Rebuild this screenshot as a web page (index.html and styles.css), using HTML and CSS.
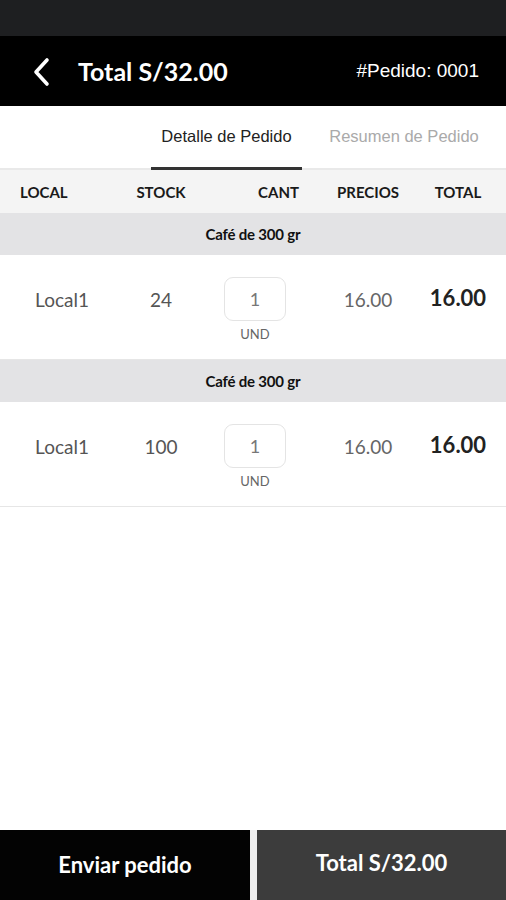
FILE: index.html
```html
<!DOCTYPE html>
<html lang="es">
<head>
<meta charset="UTF-8">
<meta name="viewport" content="width=device-width, initial-scale=1.0">
<title>Detalle de Pedido</title>
<link rel="stylesheet" href="styles.css">
</head>
<body>
<div class="app">
  <div class="status-bar"></div>

  <header class="top-bar">
    <a class="back" href="#">
      <svg width="24" height="32" viewBox="0 0 24 32">
        <polyline points="15,4 4,16 15,28" fill="none" stroke="#fff" stroke-width="3.6" stroke-linecap="round" stroke-linejoin="round"/>
      </svg>
    </a>
    <h1 class="title">Total S/32.00</h1>
    <span class="order-no">#Pedido: 0001</span>
  </header>

  <nav class="tabs">
    <a class="tab active" href="#">Detalle de Pedido</a>
    <a class="tab" href="#">Resumen de Pedido</a>
  </nav>

  <div class="cols">
    <span class="c-local">LOCAL</span>
    <span class="c-stock">STOCK</span>
    <span class="c-cant">CANT</span>
    <span class="c-price">PRECIOS</span>
    <span class="c-total">TOTAL</span>
  </div>

  <div class="items">
    <div class="group">Café de 300 gr</div>
    <div class="row">
      <span class="local">Local1</span>
      <span class="stock">24</span>
      <div class="qty">
        <input type="text" value="1">
        <span class="unit">UND</span>
      </div>
      <span class="price">16.00</span>
      <span class="total">16.00</span>
    </div>

    <div class="group">Café de 300 gr</div>
    <div class="row">
      <span class="local">Local1</span>
      <span class="stock">100</span>
      <div class="qty">
        <input type="text" value="1">
        <span class="unit">UND</span>
      </div>
      <span class="price">16.00</span>
      <span class="total">16.00</span>
    </div>
  </div>

  <footer class="bottom-bar">
    <button class="btn send">Enviar pedido</button>
    <button class="btn sum">Total S/32.00</button>
  </footer>
</div>
</body>
</html>
```

FILE: styles.css
```css
body {
  margin: 0;
  padding: 0;
  font-family: Lato, "Open Sans", sans-serif;
  background-color: #fff;
}
.app {
  display: flex;
  flex-direction: column;
  height: 900px;
}
.status-bar {
  height: 36px;
  background-color: #1e1f21;
}
.top-bar {
  display: flex;
  align-items: center;
  height: 70px;
  padding: 0 27px 0 32px;
  background-color: #000;
  color: #fff;
}
.back {
  display: flex;
  width: 24px;
  height: 32px;
  margin-top: 1px;
}
.title {
  margin: 0 0 0 22px;
  font-size: 25px;
  font-weight: 700;
}
.order-no {
  margin-left: auto;
  font-family: "Liberation Sans", Arial, sans-serif;
  font-size: 19px;
}
.tabs {
  display: flex;
  justify-content: flex-end;
  height: 62px;
  border-bottom: 2px solid #e9e9e9;
}
.tab {
  display: flex;
  align-items: center;
  justify-content: center;
  margin-bottom: -2px;
  border-bottom: 3px solid transparent;
  font-family: "Liberation Sans", Arial, sans-serif;
  font-size: 16.5px;
  color: #aaa;
  text-decoration: none;
}
.tab.active {
  width: 151px;
  color: #222;
  border-bottom-color: #333;
}
.tab + .tab {
  width: 204px;
}
.cols, .row {
  display: grid;
  grid-template-columns: 122px 78px 110px 116px 1fr;
  align-items: center;
}
.cols {
  height: 43px;
  background-color: #f4f4f4;
  font-size: 15px;
  font-weight: 700;
  color: #1a1a1a;
}
.c-local {
  padding-left: 20px;
}
.c-stock, .c-price {
  text-align: center;
}
.c-cant {
  text-align: right;
  padding-right: 11px;
}
.c-total {
  text-align: center;
  padding-right: 16px;
}
.group {
  height: 42px;
  line-height: 42px;
  text-align: center;
  background-color: #e3e3e5;
  font-size: 15px;
  font-weight: 700;
  color: #111;
  letter-spacing: -0.2px;
}
.row {
  align-items: start;
  height: 104px;
  border-bottom: 1px solid #e6e6e6;
  color: #555;
  font-size: 19px;
  text-align: center;
}
.local, .stock, .price {
  padding-top: 33px;
}
.local {
  padding-left: 2px;
}
.qty {
  display: flex;
  flex-direction: column;
  align-items: center;
  padding-top: 22px;
}
.qty input {
  width: 62px;
  height: 44px;
  box-sizing: border-box;
  border: 1px solid #e4e4e4;
  border-radius: 9px;
  text-align: center;
  font-family: Lato, sans-serif;
  font-size: 18px;
  color: #777;
  outline: none;
}
.unit {
  margin-top: 5px;
  font-size: 13px;
  color: #666;
}
.price {
  color: #666;
}
.total {
  padding-top: 29px;
  padding-right: 16px;
  font-size: 22px;
  font-weight: 700;
  color: #222;
}
.items {
  flex: 1;
}
.bottom-bar {
  display: flex;
  gap: 7px;
  height: 70px;
  background-color: #eee;
}
.btn {
  border: none;
  font-family: Lato, sans-serif;
  font-size: 22px;
  font-weight: 700;
  color: #fff;
  cursor: pointer;
  padding: 0 0 2px;
}
.btn.send {
  width: 250px;
  background-color: #030303;
}
.btn.sum {
  flex: 1;
  background-color: #3c3c3c;
  padding-bottom: 6px;
}
```
